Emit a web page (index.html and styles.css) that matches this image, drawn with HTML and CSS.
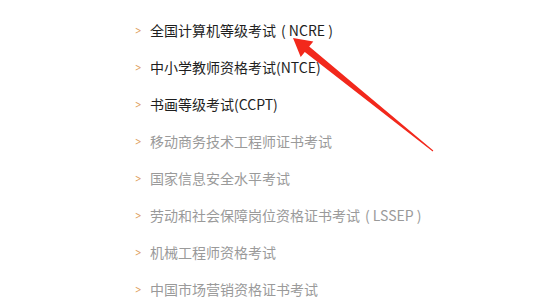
FILE: index.html
```html
<!DOCTYPE html>
<html lang="zh">
<head>
<meta charset="utf-8">
<link rel="stylesheet" href="styles.css">
</head>
<body>
<ul class="list">
  <li class="item dark"><span class="chev">&gt;</span>全国计算机等级考试<span class="par">( NCRE )</span></li>
  <li class="item dark"><span class="chev">&gt;</span>中小学教师资格考试(NTCE)</li>
  <li class="item dark"><span class="chev">&gt;</span>书画等级考试(CCPT)</li>
  <li class="item"><span class="chev">&gt;</span>移动商务技术工程师证书考试</li>
  <li class="item"><span class="chev">&gt;</span>国家信息安全水平考试</li>
  <li class="item"><span class="chev">&gt;</span>劳动和社会保障岗位资格证书考试<span class="par">( LSSEP )</span></li>
  <li class="item"><span class="chev">&gt;</span>机械工程师资格考试</li>
  <li class="item"><span class="chev">&gt;</span>中国市场营销资格证书考试</li>
</ul>
<svg class="arrow" width="550" height="300" viewBox="0 0 550 300">
  <polygon points="293,38 313.3,41.5 309.2,46.6 433.3,150.6 432.7,151.4 304.8,52 300.7,57.1" fill="#f2281c"/>
</svg>
</body>
</html>
```
FILE: styles.css
```css
html, body {
  margin: 0;
  padding: 0;
  background: #ffffff;
}
body {
  width: 550px;
  height: 300px;
  overflow: hidden;
  position: relative;
  font-family: "Noto Sans CJK SC", "Noto Sans", sans-serif;
}
.list {
  list-style: none;
  margin: 0;
  padding: 12px 0 0 135px;
}
.item {
  height: 37px;
  line-height: 37px;
  font-size: 14px;
  color: #9a9a9a;
  white-space: pre;
}
.item.dark {
  color: #1e1e1e;
}
.par {
  padding-left: 5px;
  padding-right: 5px;
}
.chev {
  display: inline-block;
  width: 15px;
  font-size: 11px;
  color: #e0a060;
  vertical-align: top;
  font-family: "DejaVu Sans", sans-serif;
  transform: scaleX(0.7);
  transform-origin: left center;
}
.arrow {
  position: absolute;
  left: 0;
  top: 0;
}
```
